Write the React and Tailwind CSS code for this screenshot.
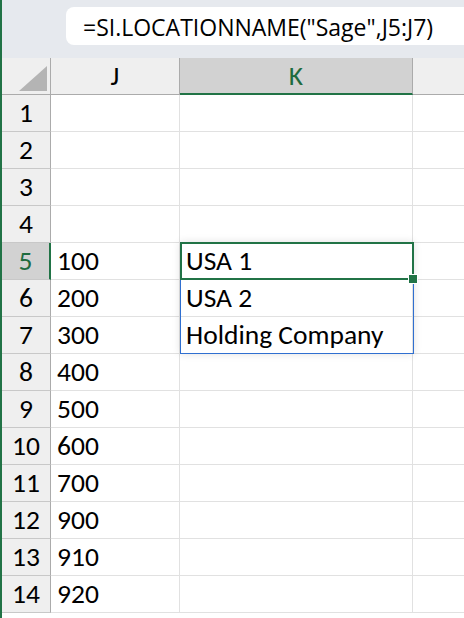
import React from 'react';

const rows = [
  { n: 1, j: '', k: '' },
  { n: 2, j: '', k: '' },
  { n: 3, j: '', k: '' },
  { n: 4, j: '', k: '' },
  { n: 5, j: '100', k: 'USA 1' },
  { n: 6, j: '200', k: 'USA 2' },
  { n: 7, j: '300', k: 'Holding Company' },
  { n: 8, j: '400', k: '' },
  { n: 9, j: '500', k: '' },
  { n: 10, j: '600', k: '' },
  { n: 11, j: '700', k: '' },
  { n: 12, j: '900', k: '' },
  { n: 13, j: '910', k: '' },
  { n: 14, j: '920', k: '' },
];

const cellFont = { fontFamily: 'Carlito, Lato, "Noto Sans", sans-serif' };

const App = () => {
  return (
    <div className="w-[464px] h-[618px] overflow-hidden bg-white border-l-2 border-[#217346]" style={cellFont}>
      {/* Formula bar */}
      <div className="h-[58px] bg-[#e6e9ee] pt-[7px] pl-[64px]">
        <div
          className="h-[38px] bg-white rounded-l-lg flex items-center pl-[17px] pt-[2px] text-[23px] leading-none text-black whitespace-nowrap"
          style={{ fontFamily: '"Open Sans", "Noto Sans", sans-serif' }}
        >
          =SI.LOCATIONNAME("Sage",J5:J7)
        </div>
      </div>

      {/* Sheet */}
      <div className="relative">
        {/* Column headers */}
        <div className="flex h-[37px] text-[27.5px] leading-[30px]">
          <div className="w-[49px] shrink-0 bg-[#efefef] border-r border-b border-[#ababab] flex items-end justify-end pr-[3px] pb-[3px]">
            <svg width="28" height="25" viewBox="0 0 28 25" className="block">
              <polygon points="28,0 28,25 0,25" fill="#b4b4b4" />
            </svg>
          </div>
          <div className="w-[129px] shrink-0 bg-[#efefef] border-r border-b border-[#ababab] flex items-center justify-center text-black">
            J
          </div>
          <div className="w-[233px] shrink-0 bg-[#d2d2d2] border-r border-[#ababab] border-b-2 border-b-[#217346] flex items-center justify-center text-[#1e6b3f]">
            K
          </div>
          <div className="flex-1 bg-[#efefef] border-b border-[#ababab]" />
        </div>

        {/* Rows */}
        {rows.map((r) => {
          const active = r.n === 5;
          return (
            <div key={r.n} className="flex h-[37px] text-[27.5px] leading-[30px] text-black">
              <div
                className={
                  active
                    ? 'w-[49px] shrink-0 bg-[#d2d2d2] border-r-2 border-[#217346] border-b border-b-[#c8c8c8] flex items-end justify-center pb-[3px] text-[#1e6b3f]'
                    : 'w-[49px] shrink-0 bg-[#efefef] border-r border-[#ababab] border-b border-b-[#c8c8c8] flex items-end justify-center pb-[3px]'
                }
              >
                {r.n}
              </div>
              <div className="w-[129px] shrink-0 border-r border-b border-[#e1e1e1] flex items-end pl-[6px] pb-[3px]">
                {r.j}
              </div>
              <div className="w-[233px] shrink-0 border-r border-b border-[#e1e1e1] flex items-end pl-[6px] pb-[3px] whitespace-nowrap">
                {r.k}
              </div>
              <div className="flex-1 border-b border-[#e1e1e1]" />
            </div>
          );
        })}

        {/* Spill range outline K5:K7 */}
        <div className="absolute left-[178px] top-[184px] w-[234px] h-[112px] border border-[#2f6fd0] shadow-[0_0_8px_rgba(0,0,0,0.12)] pointer-events-none" />
        {/* Active cell K5 */}
        <div className="absolute left-[178px] top-[184px] w-[234px] h-[38px] border-2 border-[#217346] pointer-events-none" />
        {/* Fill handle */}
        <div className="absolute left-[406px] top-[216px] w-[10px] h-[10px] bg-[#217346] border border-white pointer-events-none" />
      </div>
    </div>
  );
};

export default App;
